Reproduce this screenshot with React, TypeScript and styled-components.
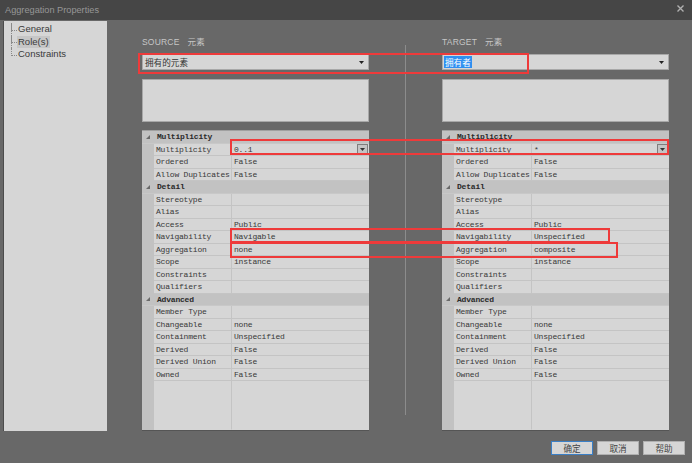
import styled, { createGlobalStyle } from 'styled-components';

const GlobalStyle = createGlobalStyle`
  html, body {
    margin: 0;
    padding: 0;
    background: #686868;
  }
`;

const SANS = `'Liberation Sans', 'Noto Sans CJK SC', sans-serif`;
const CJK = `'Noto Sans CJK SC', 'Liberation Sans', sans-serif`;
const MONO = `'Liberation Mono', 'Noto Sans CJK SC', monospace`;

const Window = styled.div`
  position: relative;
  width: 692px;
  height: 463px;
  background: #686868;
  overflow: hidden;
  font-family: ${SANS};
`;

const TitleBar = styled.div`
  height: 20px;
  background: #464646;
  display: flex;
  align-items: center;
  justify-content: space-between;
  padding: 0 8px 0 5px;
  color: #969696;
  font-size: 9.2px;
`;

const CloseIcon = styled.svg`
  width: 7px;
  height: 7px;
  margin-top: -3px;
`;

const Body = styled.div`
  display: flex;
  height: 411px;
  padding-top: 1px;
  box-sizing: border-box;
`;

const TreePanel = styled.div`
  width: 105px;
  margin-left: 3px;
  background: #d6d6d6;
  border-left: 1px solid #4c4c4c;
  box-sizing: border-box;
  padding: 2px 0 0 7px;
  display: flex;
  flex-direction: column;
`;

const TreeItem = styled.div<{ $selected?: boolean; $last?: boolean }>`
  position: relative;
  height: 12.5px;
  display: flex;
  align-items: center;
  padding-left: 5px;
  font-size: 9.5px;
  color: #3a3a3a;
  border-left: 1px dotted #8a8a8a;
  border-left-color: ${({ $last }) => ($last ? 'transparent' : '#8a8a8a')};

  &::before {
    content: '';
    position: absolute;
    left: -1px;
    top: 0;
    width: 5px;
    height: 6.5px;
    border-left: 1px dotted #8a8a8a;
    border-bottom: 1px dotted #8a8a8a;
  }

  span {
    background: ${({ $selected }) => ($selected ? '#c6c6c6' : 'transparent')};
    padding: 0 1px;
    line-height: 12px;
  }
`;

const Content = styled.div`
  flex: 1;
  display: flex;
  padding-left: 35px;
  padding-right: 23px;
`;

const Column = styled.div`
  width: 227px;
  display: flex;
  flex-direction: column;
  padding-top: 14px;
`;

const Divider = styled.div`
  width: 1px;
  margin: 24px 36px 16px 36px;
  background: #8c8c8c;
`;

const Label = styled.div`
  height: 12px;
  line-height: 12px;
  font-size: 8.5px;
  color: #c6c6c6;
  letter-spacing: 0.2px;

  b {
    font-family: ${CJK};
    font-weight: 400;
    margin-left: 8px;
    font-size: 8.5px;
  }
`;

const Combo = styled.div`
  margin-top: 7px;
  height: 16px;
  background: #d6d6d6;
  border: 1px solid #a8a8a8;
  box-sizing: border-box;
  display: flex;
  align-items: center;
  justify-content: space-between;
  padding: 0 4px 0 1px;
  font-family: ${CJK};
  font-size: 8.6px;
  color: #333;
`;

const ComboText = styled.span<{ $selected?: boolean }>`
  background: ${({ $selected }) => ($selected ? '#2f8ff0' : 'transparent')};
  color: ${({ $selected }) => ($selected ? '#ffffff' : '#333')};
  line-height: 12px;
  padding: 0 1px;
`;

const Caret = styled.svg`
  width: 5px;
  height: 3px;
`;

const DescBox = styled.div`
  margin-top: 9px;
  height: 43px;
  background: #d6d6d6;
  border: 1px solid #a8a8a8;
  box-sizing: border-box;
`;

const Grid = styled.div`
  margin-top: 8px;
  flex: 1;
  display: flex;
  flex-direction: column;
  background: #d6d6d6;
  border-top: 1px solid #a0a0a0;
  border-bottom: 1px solid #555;
  font-family: ${MONO};
  font-size: 8px;
  letter-spacing: -0.2px;
  color: #383838;
`;

const Row = styled.div<{ $filler?: boolean }>`
  display: grid;
  grid-template-columns: 12px 78px 1fr;
  height: ${({ $filler }) => ($filler ? 'auto' : '12.5px')};
  flex: ${({ $filler }) => ($filler ? 1 : 'none')};
`;

const Margin = styled.div`
  background: #c2c2c2;
`;

const NameCell = styled.div<{ $filler?: boolean }>`
  display: flex;
  align-items: center;
  padding-left: 2px;
  white-space: nowrap;
  overflow: hidden;
  border-bottom: 1px solid ${({ $filler }) => ($filler ? 'transparent' : '#c4c4c4')};
  border-right: 1px solid #c4c4c4;
`;

const ValueCell = styled(NameCell)`
  border-right: none;
  padding-left: 2px;
  justify-content: space-between;
`;

const CategoryRow = styled.div`
  height: 12.5px;
  background: #c2c2c2;
  display: flex;
  align-items: center;
  font-weight: 700;
  color: #2a2a2a;
  border-bottom: 1px solid #c8c8c8;
  box-sizing: border-box;
`;

const Toggle = styled.svg`
  width: 4px;
  height: 4px;
  margin: 0 7px 0 4px;
`;

const DropButton = styled.div`
  width: 11px;
  height: 10px;
  margin-right: 1px;
  background: #c4c4c4;
  border: 1px solid #7e7e7e;
  box-sizing: border-box;
  display: flex;
  align-items: center;
  justify-content: center;
`;

const Footer = styled.div`
  height: 32px;
  display: flex;
  justify-content: flex-end;
  align-items: flex-start;
  padding: 10px 7px 0 0;
  gap: 3px;
  box-sizing: border-box;
`;

const Button = styled.div<{ $default?: boolean }>`
  width: 42px;
  height: 14px;
  box-sizing: border-box;
  background: #d6d6d6;
  border: 1px solid ${({ $default }) => ($default ? '#3a7fc6' : '#b0b0b0')};
  display: flex;
  align-items: center;
  justify-content: center;
  font-family: ${CJK};
  font-size: 8.6px;
  color: #444;
  & + & {
    margin-left: 1px;
  }
`;

const Mark = styled.div<{ $x: number; $y: number; $w: number; $h: number }>`
  position: absolute;
  left: ${({ $x }) => $x}px;
  top: ${({ $y }) => $y}px;
  width: ${({ $w }) => $w}px;
  height: ${({ $h }) => $h}px;
  border: 2px solid #ee3a3a;
  box-sizing: border-box;
  pointer-events: none;
`;

type Prop = { name: string; value?: string; drop?: boolean };
type Category = { title: string; props: Prop[] };

const sourceGrid: Category[] = [
  {
    title: 'Multiplicity',
    props: [
      { name: 'Multiplicity', value: '0..1', drop: true },
      { name: 'Ordered', value: 'False' },
      { name: 'Allow Duplicates', value: 'False' },
    ],
  },
  {
    title: 'Detail',
    props: [
      { name: 'Stereotype' },
      { name: 'Alias' },
      { name: 'Access', value: 'Public' },
      { name: 'Navigability', value: 'Navigable' },
      { name: 'Aggregation', value: 'none' },
      { name: 'Scope', value: 'instance' },
      { name: 'Constraints' },
      { name: 'Qualifiers' },
    ],
  },
  {
    title: 'Advanced',
    props: [
      { name: 'Member Type' },
      { name: 'Changeable', value: 'none' },
      { name: 'Containment', value: 'Unspecified' },
      { name: 'Derived', value: 'False' },
      { name: 'Derived Union', value: 'False' },
      { name: 'Owned', value: 'False' },
    ],
  },
];

const targetValues: Record<string, string> = {
  Multiplicity: '*',
  Navigability: 'Unspecified',
  Aggregation: 'composite',
};

const targetGrid: Category[] = sourceGrid.map((cat) => ({
  ...cat,
  props: cat.props.map((p) =>
    targetValues[p.name] ? { ...p, value: targetValues[p.name] } : p
  ),
}));

function PropertyGrid({ data }: { data: Category[] }) {
  return (
    <Grid>
      {data.map((cat) => (
        <div key={cat.title}>
          <CategoryRow>
            <Toggle viewBox='0 0 4 4'>
              <path d='M4 0 L4 4 L0 4 Z' fill='#6a6a6a' />
            </Toggle>
            {cat.title}
          </CategoryRow>
          {cat.props.map((p) => (
            <Row key={p.name}>
              <Margin />
              <NameCell>{p.name}</NameCell>
              <ValueCell>
                <span>{p.value}</span>
                {p.drop && (
                  <DropButton>
                    <Caret viewBox='0 0 5 3'>
                      <path d='M0 0 H5 L2.5 3 Z' fill='#333' />
                    </Caret>
                  </DropButton>
                )}
              </ValueCell>
            </Row>
          ))}
        </div>
      ))}
      <Row $filler>
        <Margin />
        <NameCell $filler />
        <ValueCell $filler />
      </Row>
    </Grid>
  );
}

function RolePanel({
  side,
  role,
  selected,
  data,
}: {
  side: string;
  role: string;
  selected?: boolean;
  data: Category[];
}) {
  return (
    <Column>
      <Label>
        {side}
        <b>元素</b>
      </Label>
      <Combo>
        <ComboText $selected={selected}>{role}</ComboText>
        <Caret viewBox='0 0 5 3'>
          <path d='M0 0 H5 L2.5 3 Z' fill='#222' />
        </Caret>
      </Combo>
      <DescBox />
      <PropertyGrid data={data} />
    </Column>
  );
}

export default function App() {
  return (
    <Window>
      <GlobalStyle />
      <TitleBar>
        Aggregation Properties
        <CloseIcon viewBox='0 0 7 7'>
          <path d='M0.5 0.5 L6.5 6.5 M6.5 0.5 L0.5 6.5' stroke='#b0b0b0' strokeWidth='1.4' />
        </CloseIcon>
      </TitleBar>
      <Body>
        <TreePanel>
          <TreeItem>
            <span>General</span>
          </TreeItem>
          <TreeItem $selected>
            <span>Role(s)</span>
          </TreeItem>
          <TreeItem $last>
            <span>Constraints</span>
          </TreeItem>
        </TreePanel>
        <Content>
          <RolePanel side='SOURCE' role='拥有的元素' data={sourceGrid} />
          <Divider />
          <RolePanel side='TARGET' role='拥有者' selected data={targetGrid} />
        </Content>
      </Body>
      <Footer>
        <Button $default>确定</Button>
        <Button>取消</Button>
        <Button>帮助</Button>
      </Footer>

      <Mark $x={138} $y={53} $w={391} $h={21} />
      <Mark $x={230} $y={139} $w={439} $h={16} />
      <Mark $x={230} $y={228} $w={380} $h={15} />
      <Mark $x={230} $y={242} $w={388} $h={16} />
    </Window>
  );
}
